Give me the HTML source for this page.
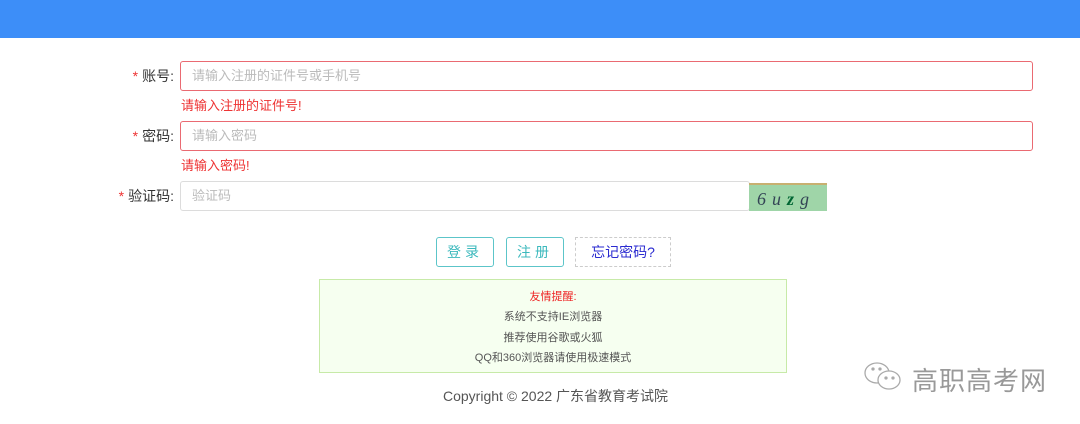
<!DOCTYPE html>
<html><head><meta charset="utf-8"><style>
body{margin:0;width:1080px;height:424px;background:#fff;font-family:"Liberation Sans","Noto Sans CJK SC",sans-serif;position:relative;overflow:hidden}
.top{position:absolute;left:0;top:0;width:1080px;height:38px;background:#3d8ef8}
.abs{position:absolute}
.lbl{font-size:14px;color:#333;text-align:right;width:80px;line-height:30px}
.lbl b{color:#e33;font-weight:normal;margin-right:4px}
.inp{border:1px solid #dcdcdc;border-radius:3px;height:28px;box-sizing:border-box;font-size:13px;color:#bbb;line-height:28px;padding-left:11px}
.err{border-color:#ea6a72}
.msg{font-size:13px;color:#e33}
.btn{border:1px solid #5cc5c9;border-radius:3px;height:30px;width:58px;box-sizing:border-box;color:#3cb9bd;font-size:14px;text-align:center;line-height:28px;letter-spacing:4px}
</style></head><body>
<div class="top"></div>
<div class="abs lbl" style="left:94px;top:61px"><b>*</b>账号:</div>
<div class="abs inp err" style="left:180px;top:61px;width:853px;height:30px">请输入注册的证件号或手机号</div>
<div class="abs msg" style="left:181px;top:95px">请输入注册的证件号!</div>
<div class="abs lbl" style="left:94px;top:121px"><b>*</b>密码:</div>
<div class="abs inp err" style="left:180px;top:121px;width:853px;height:30px">请输入密码</div>
<div class="abs msg" style="left:181px;top:155px">请输入密码!</div>
<div class="abs lbl" style="left:94px;top:181px"><b>*</b>验证码:</div>
<div class="abs inp" style="left:180px;top:181px;width:570px;height:30px">验证码</div>
<div class="abs" style="left:749px;top:183px;width:78px;height:28px;background:#9fd5a8;font:italic 18px 'Liberation Serif',serif;color:#345;line-height:28px;letter-spacing:6px;padding-left:8px;box-sizing:border-box;border-top:2px solid #c8b070">6u<b style="color:#063">z</b>g</div>
<div class="abs btn" style="left:436px;top:237px">登录</div>
<div class="abs btn" style="left:506px;top:237px">注册</div>
<div class="abs" style="left:575px;top:237px;width:96px;height:30px;border:1px dashed #ccc;box-sizing:border-box;color:#2a2ad0;font-size:14px;text-align:center;line-height:28px">忘记密码?</div>
<div class="abs" style="left:319px;top:279px;width:468px;height:94px;background:#f6fff0;border:1px solid #c7eaa8;box-sizing:border-box;text-align:center;font-size:11px;color:#555;line-height:20.3px;padding-top:7px">
<div style="color:#e22">友情提醒:</div><div>系统不支持IE浏览器</div><div>推荐使用谷歌或火狐</div><div>QQ和360浏览器请使用极速模式</div></div>
<div class="abs" style="left:443px;top:386px;font-size:14px;color:#555">Copyright © 2022 广东省教育考试院</div>
<svg class="abs" style="left:862px;top:360px" width="44" height="34" viewBox="0 0 44 34" fill="none" stroke="#aaa" stroke-width="1.3"><ellipse cx="15" cy="13" rx="12" ry="10"/><ellipse cx="27" cy="20" rx="11" ry="9" fill="#fff"/><circle cx="11" cy="9" r="1" fill="#aaa"/><circle cx="18" cy="9" r="1" fill="#aaa"/><circle cx="24" cy="18" r="1" fill="#aaa"/><circle cx="31" cy="18" r="1" fill="#aaa"/></svg>
<div class="abs" style="left:912px;top:361px;font-size:26px;color:#999;letter-spacing:1px">高职高考网</div>
</body></html>
